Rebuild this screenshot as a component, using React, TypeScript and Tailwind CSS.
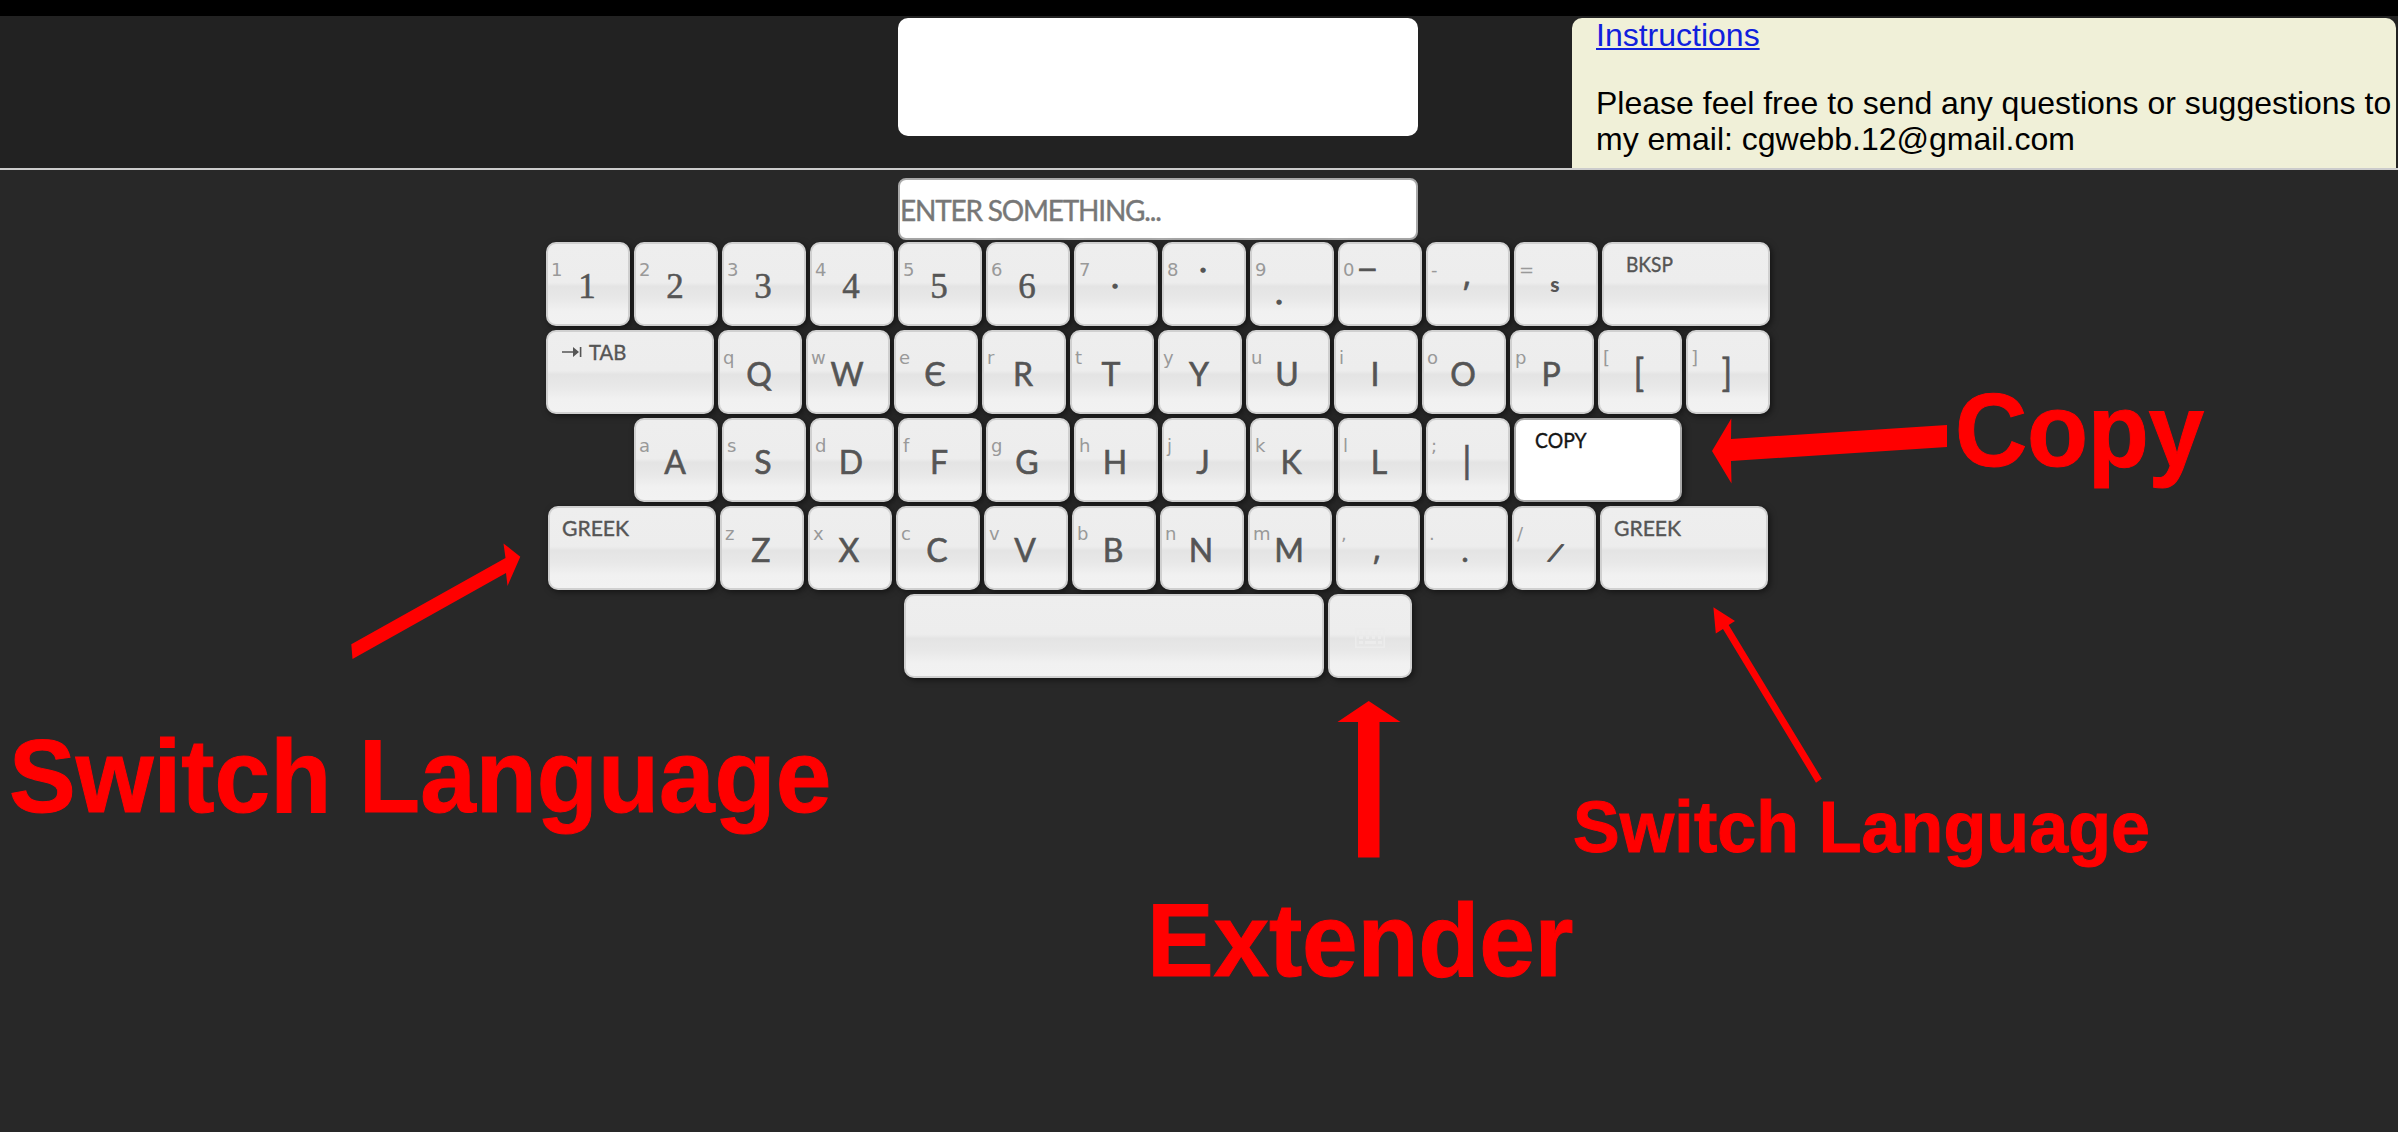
type KeyDef = {
  hint?: string;
  main: string;
  cls?: string;
};

const lato = "font-['Lato','Noto_Sans',sans-serif] [-webkit-text-stroke:0.4px_currentColor]";
const serif =
  "font-['Liberation_Serif',serif] text-[35px] translate-y-[2px] [-webkit-text-stroke:0.5px_currentColor]";
const glyph = "font-['Lato','Noto_Sans',sans-serif] [-webkit-text-stroke:0.6px_currentColor]";
const letter = `${glyph} text-[32px] translate-y-[2px]`;
const noto = "font-['Noto_Sans',sans-serif] text-[32px] [-webkit-text-stroke:0.6px_currentColor]";

const keyBase =
  'relative h-[84px] shrink-0 rounded-[10px] border-2 border-[#d0d0d0] bg-[linear-gradient(to_bottom,#eeeeee_0%,#ededed_48%,#e4e4e4_53%,#e8e8e8_68%,#f1f1f1_84%,#f2f2f2_100%)] text-[#555] shadow-[2px_2px_6px_rgba(0,0,0,0.5)]';

const digitRow: KeyDef[] = [
  ...['1', '2', '3', '4', '5', '6'].map((n) => ({ hint: n, main: n, cls: serif })),
  { hint: '7', main: '●', cls: "font-['DejaVu_Sans'] text-[7px] translate-y-[2px]" },
  { hint: '8', main: '●', cls: "font-['DejaVu_Sans'] text-[7px] -translate-y-[14px]" },
  { hint: '9', main: '●', cls: "font-['DejaVu_Sans'] text-[7px] -translate-x-[12px] translate-y-[18px]" },
  { hint: '0', main: '–', cls: `${glyph} text-[32px] -translate-x-[12px] -translate-y-[16px] scale-x-[1.25]` },
  { hint: '-', main: ',', cls: `${noto} -translate-y-[10px]` },
  { hint: '=', main: 's', cls: "font-['Lato'] font-black text-[21px] -translate-y-[1px]" },
];

const toKeys = (s: string, mains = s.toUpperCase()): KeyDef[] =>
  s.split('').map((c, i) => ({ hint: c, main: mains[i], cls: letter }));

const bracket = `${glyph} text-[39px] -translate-y-[1px] scale-x-90`;

const topRow: KeyDef[] = [
  ...toKeys('qwertyuiop', 'QWЄRTYUIOP'),
  { hint: '[', main: '[', cls: bracket },
  { hint: ']', main: ']', cls: bracket },
];
const homeRow: KeyDef[] = [
  ...toKeys('asdfghjkl'),
  { hint: ';', main: '|', cls: `${glyph} text-[37px] -translate-y-[1px]` },
];
const bottomRow: KeyDef[] = [
  ...toKeys('zxcvbnm'),
  { hint: ',', main: ',', cls: noto },
  { hint: '.', main: '.', cls: letter },
  {
    hint: '/',
    main: '/',
    cls: "font-['Lato'] text-[26px] translate-x-[3px] translate-y-[4px] rotate-[18deg] [-webkit-text-stroke:1.2px_currentColor]",
  },
];

function Key({ hint, main, cls }: KeyDef) {
  return (
    <div className={`${keyBase} flex w-[84px] items-center justify-center pr-[2px]`}>
      <span className="absolute left-[3px] top-[15px] font-['DejaVu_Sans',sans-serif] text-[18px] leading-[21px] text-[#999]">
        {hint}
      </span>
      <span className={`block leading-none ${cls ?? letter}`}>{main}</span>
    </div>
  );
}

function WideKey({
  label,
  pad,
  squeeze,
  tab,
  active,
}: {
  label: string;
  pad: string;
  squeeze: string;
  tab?: boolean;
  active?: boolean;
}) {
  return (
    <div
      className={
        active
          ? 'relative h-[84px] w-[168px] shrink-0 rounded-[10px] border-2 border-[#a9a9a9] bg-white text-[#151515] shadow-[2px_2px_6px_rgba(0,0,0,0.5)]'
          : `${keyBase} w-[168px]`
      }
    >
      <div className={`flex items-center pt-[8px] text-[22px] leading-[24px] ${pad} ${lato}`}>
        {tab && (
          <svg width="20" height="12" viewBox="0 0 20 12" className="mr-[7px] fill-current">
            <path d="M0 5.2h11V1l6 5-6 5V6.8H0zM17.8 1h1.6v10h-1.6z" />
          </svg>
        )}
        <span className={`origin-left ${squeeze}`}>{label}</span>
      </div>
    </div>
  );
}

function Row({ children }: { children: React.ReactNode }) {
  return <div className="flex justify-center gap-1">{children}</div>;
}

const note =
  "absolute origin-[0_84.65%] scale-y-[1.03] whitespace-nowrap font-['Liberation_Sans',Arial,sans-serif] font-bold leading-none text-[#ff0000] [-webkit-text-stroke:1px_#ff0000]";

function Annotations() {
  return (
    <div className="pointer-events-none absolute inset-0">
      <svg width="2398" height="1132" viewBox="0 0 2398 1132" className="absolute inset-0" fill="#ff0000">
        <path d="M1712 451L1731.3 418.5L1731 439L1947 425V447L1731 461L1731.5 483.5Z" />
        <path d="M1713.4 607.3L1735 621L1728.7 625L1821.8 778.7L1816 782.7L1723 629L1715.8 633.5Z" />
        <path d="M520.3 556.7L503.5 543.5L505.5 558L351.3 644.3L352.5 659L506 573L507.5 586Z" />
        <path d="M1368.7 701L1400.5 722H1379.5V857.5H1358V722H1337.5Z" />
      </svg>
      <span className={`${note} left-[1955px] top-[381px] text-[100px] tracking-[-0.3px]`}>Copy</span>
      <span className={`${note} left-[9px] top-[727px] text-[100px]`}>Switch Language</span>
      <span className={`${note} left-[1573px] top-[793px] text-[70px] tracking-[0.1px]`}>Switch Language</span>
      <span className={`${note} left-[1147px] top-[891px] text-[100px] tracking-[-0.2px]`}>Extender</span>
    </div>
  );
}

export default function App() {
  return (
    <div className="relative h-[1132px] w-[2398px] overflow-hidden bg-[#282828]">
      <header className="flex h-[170px] border-b-2 border-t-[16px] border-b-[#ccc] border-t-black bg-[#222] pt-[2px]">
        <div className="ml-[898px] h-[118px] w-[520px] rounded-[10px] bg-white" />
        <div className="ml-[154px] w-[824px] rounded-t-[10px] bg-[#f0f0d8] pl-6 font-['Liberation_Sans',Arial,sans-serif] text-[32px] leading-[36px] text-black">
          <a
            className="-mt-[1px] block text-[#1020dd] underline decoration-2 underline-offset-[2px] [text-decoration-skip-ink:none]"
            href="#"
          >
            Instructions
          </a>
          <p className="mt-[32px] whitespace-nowrap">
            Please feel free to send any questions or suggestions to
            <br />
            my email: cgwebb.12@gmail.com
          </p>
        </div>
      </header>

      <main className="flex w-[2316px] flex-col items-center pt-2">
        <input
          className={`h-[62px] w-[520px] rounded-[8px] border-2 border-[#a9a9a9] bg-white pt-[2px] text-[28px] tracking-[-1.2px] text-[#777] outline-none placeholder:text-[#777] placeholder:opacity-100 ${lato}`}
          placeholder="ENTER SOMETHING..."
        />
        <div className="mt-[2px] flex flex-col gap-1">
          <Row>
            {digitRow.map((k) => <Key key={k.hint} {...k} />)}
            <WideKey label="BKSP" pad="pl-[22px]" squeeze="scale-x-[0.87]" />
          </Row>
          <Row>
            <WideKey label="TAB" pad="pl-[14px]" squeeze="scale-x-[0.92]" tab />
            {topRow.map((k) => <Key key={k.hint} {...k} />)}
          </Row>
          <Row>
            {homeRow.map((k) => <Key key={k.hint} {...k} />)}
            <WideKey label="COPY" pad="pl-[19px]" squeeze="scale-x-[0.88]" active />
          </Row>
          <Row>
            <WideKey label="GREEK" pad="pl-[12px]" squeeze="scale-x-[0.96]" />
            {bottomRow.map((k) => <Key key={k.hint} {...k} />)}
            <WideKey label="GREEK" pad="pl-[12px]" squeeze="scale-x-[0.96]" />
          </Row>
          <Row>
            <div className={`${keyBase} w-[420px]`} />
            <div className={`${keyBase} flex w-[84px] items-center justify-center pt-[4px]`}>
              <svg width="30" height="20" viewBox="0 0 30 20" fill="none" stroke="#ececec" strokeWidth="1.6">
                <rect x="0.8" y="0.8" width="28.4" height="18.4" />
                <path d="M4 5h3m3 0h3m3 0h3m3 0h4M4 9.5h4m3 0h3m3 0h3m3 0h3M4 14.5h4m2 0h11m2 0h4" strokeWidth="3" />
              </svg>
            </div>
          </Row>
        </div>
      </main>
      <Annotations />
    </div>
  );
}
